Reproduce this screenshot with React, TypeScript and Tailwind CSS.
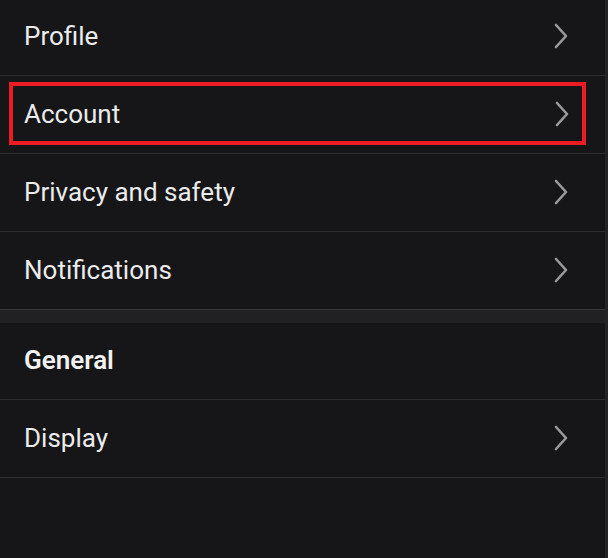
import React from "react"

function Chevron() {
  return (
    <svg width="14" height="26" viewBox="0 0 14 26" fill="none" className="shrink-0">
      <path d="M2 2 L12 13 L2 24" stroke="#9a9a9c" strokeWidth="2.6" strokeLinecap="round" strokeLinejoin="round" />
    </svg>
  )
}

function Row({
  label,
  first,
  highlight,
}: {
  label: string
  first?: boolean
  highlight?: boolean
}) {
  return (
    <div className={first ? "h-[75px]" : "h-[78px] border-t border-[#2e2e31]"}>
      <div
        className={
          highlight
            ? "ml-[9px] mr-[19px] mt-[6px] flex h-[63px] items-center justify-between border-4 border-[#ed1c24] pl-[11px] pr-[13px]"
            : first
              ? "flex h-full items-center justify-between pb-[3px] pl-[24px] pr-[37px]"
              : "flex h-full items-center justify-between pb-[2px] pl-[24px] pr-[37px]"
        }
      >
        <span className="text-[26px] leading-none text-[#ebebeb]">{label}</span>
        <Chevron />
      </div>
    </div>
  )
}

export default function App() {
  return (
    <div
      className="flex h-[558px] w-[608px] overflow-hidden bg-[#161618]"
      style={{ fontFamily: "Roboto, 'Noto Sans', sans-serif" }}
    >
      <div className="flex-1">
        <Row label="Profile" first />
        <Row label="Account" highlight />
        <Row label="Privacy and safety" />
        <Row label="Notifications" />
        <div className="h-[14px] border-t border-[#38383b] bg-[#212124]" />
        <div className="flex h-[76px] items-center pb-[2px] pl-[24px]">
          <span className="text-[26px] font-semibold leading-none text-[#f2f2f2]">General</span>
        </div>
        <Row label="Display" />
        <div className="border-t border-[#2e2e31]" />
      </div>
      <div className="w-[3px] bg-[#232326]" />
    </div>
  )
}
